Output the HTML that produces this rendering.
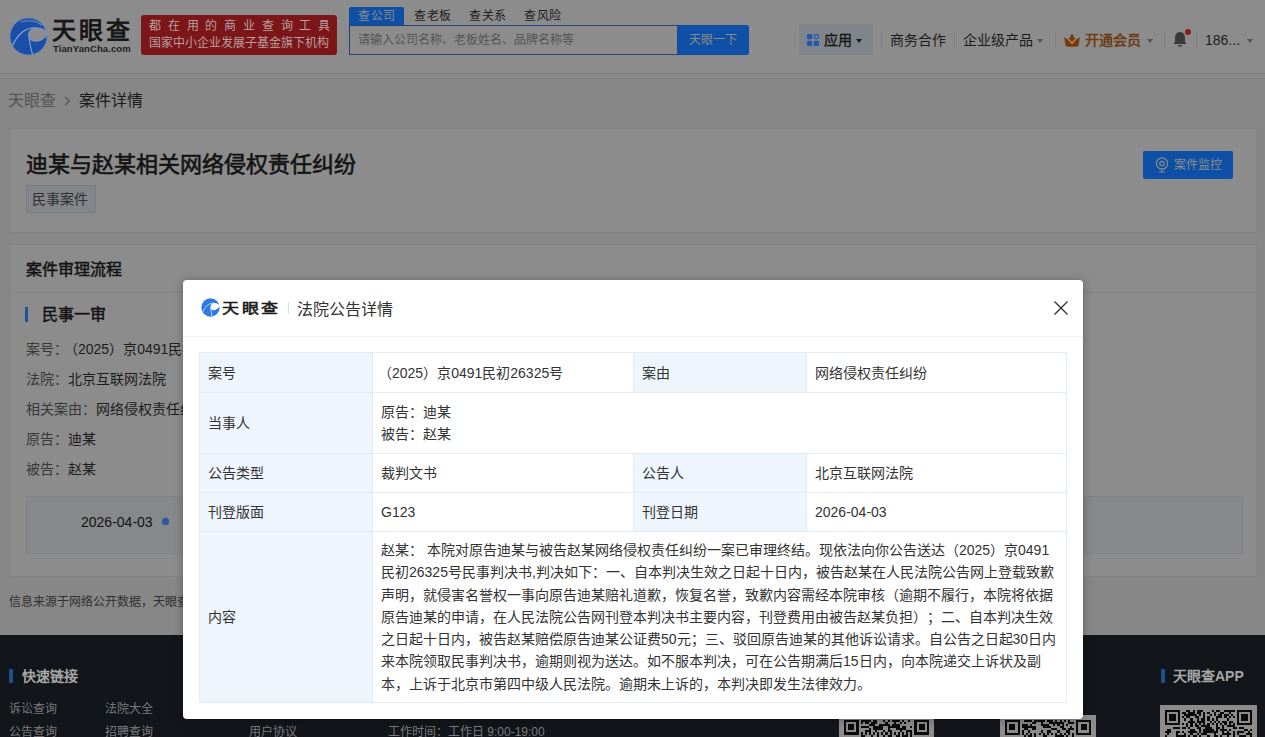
<!DOCTYPE html>
<html lang="zh-CN"><head><meta charset="utf-8">
<style>
*{box-sizing:border-box;margin:0;padding:0}
html,body{width:1265px;height:737px;overflow:hidden}
body{text-spacing-trim:space-all;font-feature-settings:"chws" 0,"halt" 0;font-family:"Liberation Sans",sans-serif;background:#878787;color:#1c1c1c;position:relative;font-size:14px}
.a{position:absolute;white-space:nowrap;line-height:1}
#hdr{position:absolute;left:0;top:0;width:1265px;height:74px;background:#8c8c8c;border-bottom:1px solid #7f7f7f}
.card{position:absolute;background:#8c8c8c;border:1px solid #838383;border-radius:2px}
#foot{position:absolute;left:0;top:635px;width:1265px;height:102px;background:#12151a}
#ov{position:absolute;left:0;top:0;width:1265px;height:737px;background:rgba(0,0,0,.45)}
#modal{position:absolute;left:183px;top:280px;width:900px;height:439px;background:#fff;border-radius:4px;box-shadow:0 1px 10px rgba(0,0,0,.3)}
table.t{position:absolute;left:16px;top:72px;width:868px;border-collapse:collapse;font-size:14px;color:#333;line-height:22px}
table.t td{border:1px solid #e3ebf3;padding:0 8px;vertical-align:middle;white-space:nowrap}
table.t td.l{background:#eef5fd;}
.sep{position:absolute;top:32px;width:1px;height:16px;background:#808080}
.caret{position:absolute;width:0;height:0;border-left:3.5px solid transparent;border-right:3.5px solid transparent;border-top:4px solid #545454}
.qr{position:absolute;background:#8c8c8c;padding:4px}
</style></head><body>
<div id="hdr">
  <!-- logo -->
  <svg class="a" style="left:9px;top:17px" width="39" height="39" viewBox="0 0 39 39">
    <circle cx="19.5" cy="19.5" r="18.5" fill="#1b4ea6" stroke="#5f82bb" stroke-width="0.9"/>
    <path d="M3.5 29 C8 18 16 10.5 27 10.8" stroke="#7f9fd0" stroke-width="1.3" fill="none"/>
    <path d="M12 5 C20 3 28 4 33 8.5" stroke="#5f84c0" stroke-width="1.2" fill="none"/>
    <path d="M27.5 11 C22.5 11 19.5 14 19.5 18 C19.5 22 23 24.5 27.5 24.2 C32 24 35 21.5 37.8 18.5 L37.2 14.5 C35 12 31.5 11 27.5 11 Z" fill="#8c8c8c" stroke="#7f9fd0" stroke-width="0.9"/>
    <path d="M20 21 C21 27 22 32 23.5 37.5" stroke="#7f9fd0" stroke-width="1.2" fill="none"/>
  </svg>
  <div class="a" style="left:52px;top:19px;font-size:24px;color:#161616;letter-spacing:3.2px;-webkit-text-stroke:0.9px #161616">天眼查</div>
  <div class="a" style="left:53px;top:44px;font-size:9.5px;font-weight:bold;color:#1c1c1c;letter-spacing:0.1px">TianYanCha.com</div>
  <div class="a" style="left:141px;top:15px;width:196px;height:40px;background:#7d1619;border-radius:3px"></div>
  <div class="a" style="left:149px;top:20px;font-size:12px;color:#b8a0a0;letter-spacing:6.8px">都在用的商业查询工具</div>
  <div class="a" style="left:149px;top:37px;font-size:12px;color:#b8a0a0">国家中小企业发展子基金旗下机构</div>
  <!-- search -->
  <div class="a" style="left:349px;top:7px;width:55px;height:19px;background:#0d50a5;border-radius:2px 2px 0 0"></div>
  <div class="a" style="left:358px;top:10px;font-size:12px;letter-spacing:0.5px;color:#8c8c8c">查公司</div>
  <div class="a" style="left:414px;top:10px;font-size:12px;letter-spacing:0.5px;color:#1c1c1c">查老板</div>
  <div class="a" style="left:469px;top:10px;font-size:12px;letter-spacing:0.5px;color:#1c1c1c">查关系</div>
  <div class="a" style="left:524px;top:10px;font-size:12px;letter-spacing:0.5px;color:#1c1c1c">查风险</div>
  <div class="a" style="left:349px;top:25px;width:330px;height:30px;border:1px solid #22407a;background:#8c8c8c"></div>
  <div class="a" style="left:358px;top:34px;font-size:12px;color:#545454">请输入公司名称、老板姓名、品牌名称等</div>
  <div class="a" style="left:677px;top:25px;width:72px;height:30px;background:#0d50a5;border-radius:0 2px 2px 0"></div>
  <div class="a" style="left:689px;top:34px;font-size:12px;color:#8c8c8c">天眼一下</div>
  <!-- nav -->
  <div class="sep" style="left:794px"></div>
  <div class="a" style="left:799px;top:24px;width:74px;height:31px;background:#80858c"></div>
  <svg class="a" style="left:807px;top:34px" width="12" height="12" viewBox="0 0 12 12">
    <rect x="0" y="0" width="5.2" height="5.2" rx="1.2" fill="#1f58ad"/>
    <circle cx="9.4" cy="2.6" r="2.1" fill="none" stroke="#1f58ad" stroke-width="1.1"/>
    <rect x="0" y="6.8" width="5.2" height="5.2" rx="1.2" fill="#1f58ad"/>
    <rect x="6.8" y="6.8" width="5.2" height="5.2" rx="1.2" fill="#1f58ad"/>
  </svg>
  <div class="a" style="left:824px;top:33px;font-size:14px;color:#131313;-webkit-text-stroke:0.3px #131313">应用</div>
  <div class="caret" style="left:856px;top:39px;border-top-color:#1c1c1c"></div>
  <div class="sep" style="left:881px"></div>
  <div class="a" style="left:890px;top:33px;font-size:14px;color:#1c1c1c">商务合作</div>
  <div class="sep" style="left:954px"></div>
  <div class="a" style="left:963px;top:33px;font-size:14px;color:#1c1c1c">企业级产品</div>
  <div class="caret" style="left:1037px;top:39px"></div>
  <div class="sep" style="left:1055px"></div>
  <svg class="a" style="left:1064px;top:33px" width="16" height="14" viewBox="0 0 16 14">
    <path d="M0.3 4.2 L4.2 6.8 L8 0.6 L11.8 6.8 L15.7 4.2 L14.8 11 Q14.4 13.8 11.8 13.8 L4.2 13.8 Q1.6 13.8 1.2 11 Z" fill="#723c10"/>
    <path d="M5 7 L8 10.2 L11 7" stroke="#b87a45" stroke-width="1.8" fill="none" stroke-linecap="round"/>
  </svg>
  <div class="a" style="left:1085px;top:33px;font-size:14px;color:#6e3c14;font-weight:bold">开通会员</div>
  <div class="caret" style="left:1147px;top:39px"></div>
  <div class="sep" style="left:1164px"></div>
  <svg class="a" style="left:1173px;top:31px" width="14" height="16" viewBox="0 0 14 16">
    <path d="M7 1 C3.5 1 2 4 2 7 L2 11 L0.5 13 L13.5 13 L12 11 L12 7 C12 4 10.5 1 7 1 Z" fill="#3a3a3a"/>
    <rect x="5" y="14" width="4" height="1.6" rx="0.8" fill="#3a3a3a"/>
  </svg>
  <div class="a" style="left:1185px;top:29px;width:6px;height:6px;border-radius:50%;background:#8a1a1f"></div>
  <div class="sep" style="left:1196px"></div>
  <div class="a" style="left:1205px;top:33px;font-size:14px;color:#1c1c1c">186...</div>
  <div class="caret" style="left:1247px;top:39px"></div>
</div>

<div class="a" style="left:0;top:74px;width:1265px;height:5px;background:#898989;border-bottom:1px solid #838383"></div>
<div class="a" style="left:8px;top:93px;font-size:16px;color:#545454">天眼查</div>
<svg class="a" style="left:64px;top:96px" width="7" height="10" viewBox="0 0 7 10"><path d="M1 1 L5.5 5 L1 9" stroke="#545454" stroke-width="1.2" fill="none"/></svg>
<div class="a" style="left:79px;top:93px;font-size:16px;color:#1c1c1c">案件详情</div>

<div class="card" style="left:9px;top:128px;width:1248px;height:105px">
  <div class="a" style="left:16px;top:25px;font-size:22px;color:#131313;-webkit-text-stroke:0.6px #131313">迪某与赵某相关网络侵权责任纠纷</div>
  <div class="a" style="left:16px;top:56px;width:70px;height:28px;background:#83868a;border:1px solid #787d85;border-radius:2px"></div>
  <div class="a" style="left:22px;top:63px;font-size:14px;color:#2f2f2f">民事案件</div>
  <div class="a" style="left:1133px;top:22px;width:90px;height:28px;background:#0d50a5;border-radius:2px"></div>
  <svg class="a" style="left:1145px;top:28px" width="14" height="16" viewBox="0 0 14 16">
    <circle cx="7" cy="6.5" r="5.6" fill="none" stroke="#8c8c8c" stroke-width="1.2"/>
    <circle cx="7" cy="6.5" r="2.2" fill="none" stroke="#8c8c8c" stroke-width="1.2"/>
    <path d="M4 15 L10 15 M7 12 L7 15" stroke="#8c8c8c" stroke-width="1.2"/>
  </svg>
  <div class="a" style="left:1164px;top:30px;font-size:12px;color:#8c8c8c">案件监控</div>
</div>

<div class="card" style="left:9px;top:244px;width:1248px;height:333px">
  <div class="a" style="left:16px;top:17px;font-size:16px;color:#131313;-webkit-text-stroke:0.5px #131313">案件审理流程</div>
  <div class="a" style="left:0;top:47px;width:1246px;height:1px;background:#838383"></div>
  <div class="a" style="left:15px;top:62px;width:3px;height:15px;background:#1f5299"></div>
  <div class="a" style="left:32px;top:62px;font-size:16px;color:#131313;-webkit-text-stroke:0.5px #131313">民事一审</div>
  <div class="a" style="left:16px;top:97px;font-size:14px;color:#383838">案号：<span style="color:#1c1c1c;margin-left:-4px">（2025）京0491民初26325号</span></div>
  <div class="a" style="left:16px;top:127px;font-size:14px;color:#383838">法院：<span style="color:#1c1c1c">北京互联网法院</span></div>
  <div class="a" style="left:16px;top:157px;font-size:14px;color:#383838">相关案由：<span style="color:#1c1c1c">网络侵权责任纠纷</span></div>
  <div class="a" style="left:16px;top:187px;font-size:14px;color:#383838">原告：<span style="color:#1c1c1c">迪某</span></div>
  <div class="a" style="left:16px;top:217px;font-size:14px;color:#383838">被告：<span style="color:#1c1c1c">赵某</span></div>
  <div class="a" style="left:16px;top:251px;width:1217px;height:58px;background:#87888a;border:1px solid #808285"></div>
  <div class="a" style="left:71px;top:270px;font-size:14px;color:#131313">2026-04-03</div>
  <div class="a" style="left:152px;top:273px;width:7px;height:7px;border-radius:50%;background:#27599c;box-shadow:0 0 0 1.5px #7d8590"></div>
</div>
<div class="a" style="left:9px;top:596px;font-size:12px;color:#303030">信息来源于网络公开数据，天眼查</div>

<div id="foot">
  <div class="a" style="left:9px;top:34px;width:4px;height:14px;background:#1f4e8e"></div>
  <div class="a" style="left:22px;top:34px;font-size:14px;font-weight:bold;color:#a6a6a6">快速链接</div>
  <div class="a" style="left:9px;top:68px;font-size:12px;color:#7a7a7a">诉讼查询</div>
  <div class="a" style="left:105px;top:68px;font-size:12px;color:#7a7a7a">法院大全</div>
  <div class="a" style="left:9px;top:91px;font-size:12px;color:#7a7a7a">公告查询</div>
  <div class="a" style="left:105px;top:91px;font-size:12px;color:#7a7a7a">招聘查询</div>
  <div class="a" style="left:249px;top:91px;font-size:12px;color:#7a7a7a">用户协议</div>
  <div class="a" style="left:388px;top:91px;font-size:12px;color:#7a7a7a">工作时间：工作日 9:00-19:00</div>
  <div class="a" style="left:1161px;top:34px;width:4px;height:14px;background:#1f4e8e"></div>
  <div class="a" style="left:1173px;top:34px;font-size:14px;font-weight:bold;color:#a6a6a6">天眼查APP</div>
  <svg class="a" style="left:839px;top:80px;background:#8c8c8c" width="95" height="95" viewBox="-2.412 -2.412 45.824 45.824" shape-rendering="crispEdges"><path fill="#0a0a0a" d="M0 0h7v1h-7zM8 0h5v1h-5zM14 0h2v1h-2zM19 0h1v1h-1zM21 0h1v1h-1zM23 0h4v1h-4zM28 0h1v1h-1zM31 0h1v1h-1zM34 0h7v1h-7zM0 1h1v1h-1zM6 1h1v1h-1zM8 1h1v1h-1zM10 1h2v1h-2zM13 1h3v1h-3zM20 1h1v1h-1zM24 1h1v1h-1zM27 1h1v1h-1zM29 1h1v1h-1zM34 1h1v1h-1zM40 1h1v1h-1zM0 2h1v1h-1zM2 2h3v1h-3zM6 2h1v1h-1zM12 2h3v1h-3zM17 2h5v1h-5zM23 2h4v1h-4zM34 2h1v1h-1zM36 2h3v1h-3zM40 2h1v1h-1zM0 3h1v1h-1zM2 3h3v1h-3zM6 3h1v1h-1zM8 3h4v1h-4zM14 3h5v1h-5zM21 3h6v1h-6zM28 3h2v1h-2zM32 3h1v1h-1zM34 3h1v1h-1zM36 3h3v1h-3zM40 3h1v1h-1zM0 4h1v1h-1zM2 4h3v1h-3zM6 4h1v1h-1zM12 4h1v1h-1zM14 4h5v1h-5zM21 4h1v1h-1zM25 4h5v1h-5zM34 4h1v1h-1zM36 4h3v1h-3zM40 4h1v1h-1zM0 5h1v1h-1zM6 5h1v1h-1zM10 5h3v1h-3zM15 5h1v1h-1zM19 5h1v1h-1zM21 5h2v1h-2zM27 5h1v1h-1zM30 5h3v1h-3zM34 5h1v1h-1zM40 5h1v1h-1zM0 6h7v1h-7zM8 6h1v1h-1zM10 6h1v1h-1zM12 6h1v1h-1zM14 6h1v1h-1zM16 6h1v1h-1zM18 6h1v1h-1zM20 6h1v1h-1zM22 6h1v1h-1zM24 6h1v1h-1zM26 6h1v1h-1zM28 6h1v1h-1zM30 6h1v1h-1zM32 6h1v1h-1zM34 6h7v1h-7zM8 7h2v1h-2zM13 7h1v1h-1zM16 7h1v1h-1zM19 7h1v1h-1zM21 7h2v1h-2zM25 7h2v1h-2zM28 7h3v1h-3zM32 7h1v1h-1zM2 8h3v1h-3zM6 8h3v1h-3zM11 8h2v1h-2zM16 8h2v1h-2zM19 8h2v1h-2zM24 8h1v1h-1zM26 8h1v1h-1zM28 8h2v1h-2zM32 8h2v1h-2zM35 8h6v1h-6zM0 9h1v1h-1zM2 9h1v1h-1zM4 9h2v1h-2zM7 9h2v1h-2zM11 9h2v1h-2zM14 9h1v1h-1zM16 9h2v1h-2zM19 9h1v1h-1zM23 9h1v1h-1zM27 9h5v1h-5zM33 9h3v1h-3zM39 9h2v1h-2zM0 10h5v1h-5zM6 10h1v1h-1zM8 10h1v1h-1zM10 10h5v1h-5zM16 10h1v1h-1zM18 10h8v1h-8zM32 10h2v1h-2zM35 10h1v1h-1zM38 10h1v1h-1zM3 11h1v1h-1zM13 11h5v1h-5zM23 11h2v1h-2zM30 11h1v1h-1zM32 11h3v1h-3zM36 11h1v1h-1zM39 11h2v1h-2zM0 12h1v1h-1zM5 12h3v1h-3zM9 12h1v1h-1zM11 12h3v1h-3zM17 12h1v1h-1zM19 12h3v1h-3zM23 12h1v1h-1zM26 12h2v1h-2zM30 12h3v1h-3zM34 12h1v1h-1zM36 12h1v1h-1zM39 12h1v1h-1zM3 13h1v1h-1zM5 13h1v1h-1zM7 13h7v1h-7zM15 13h1v1h-1zM18 13h1v1h-1zM22 13h3v1h-3zM27 13h5v1h-5zM33 13h1v1h-1zM35 13h2v1h-2zM38 13h2v1h-2zM6 14h2v1h-2zM9 14h1v1h-1zM12 14h2v1h-2zM15 14h4v1h-4zM21 14h1v1h-1zM23 14h1v1h-1zM25 14h4v1h-4zM30 14h2v1h-2zM34 14h7v1h-7zM0 15h1v1h-1zM4 15h2v1h-2zM7 15h4v1h-4zM12 15h1v1h-1zM16 15h5v1h-5zM24 15h2v1h-2zM28 15h1v1h-1zM30 15h2v1h-2zM36 15h3v1h-3zM4 16h1v1h-1zM6 16h1v1h-1zM8 16h1v1h-1zM11 16h3v1h-3zM16 16h2v1h-2zM20 16h2v1h-2zM23 16h3v1h-3zM29 16h3v1h-3zM34 16h3v1h-3zM38 16h2v1h-2zM1 17h4v1h-4zM10 17h1v1h-1zM12 17h1v1h-1zM14 17h2v1h-2zM17 17h1v1h-1zM19 17h4v1h-4zM25 17h3v1h-3zM29 17h4v1h-4zM38 17h2v1h-2zM1 18h1v1h-1zM3 18h7v1h-7zM11 18h1v1h-1zM13 18h2v1h-2zM17 18h4v1h-4zM22 18h2v1h-2zM25 18h2v1h-2zM29 18h3v1h-3zM33 18h1v1h-1zM36 18h2v1h-2zM40 18h1v1h-1zM1 19h3v1h-3zM8 19h3v1h-3zM13 19h4v1h-4zM18 19h1v1h-1zM24 19h3v1h-3zM28 19h2v1h-2zM31 19h3v1h-3zM35 19h1v1h-1zM39 19h2v1h-2zM0 20h2v1h-2zM3 20h4v1h-4zM11 20h1v1h-1zM13 20h1v1h-1zM15 20h1v1h-1zM17 20h4v1h-4zM23 20h2v1h-2zM27 20h1v1h-1zM31 20h2v1h-2zM36 20h4v1h-4zM2 21h1v1h-1zM4 21h2v1h-2zM8 21h1v1h-1zM11 21h5v1h-5zM18 21h3v1h-3zM22 21h3v1h-3zM27 21h3v1h-3zM32 21h2v1h-2zM35 21h3v1h-3zM39 21h1v1h-1zM0 22h2v1h-2zM4 22h5v1h-5zM10 22h1v1h-1zM12 22h1v1h-1zM14 22h3v1h-3zM20 22h1v1h-1zM22 22h1v1h-1zM24 22h2v1h-2zM28 22h2v1h-2zM32 22h2v1h-2zM36 22h2v1h-2zM39 22h1v1h-1zM2 23h1v1h-1zM4 23h2v1h-2zM8 23h3v1h-3zM12 23h3v1h-3zM17 23h1v1h-1zM20 23h1v1h-1zM22 23h1v1h-1zM26 23h2v1h-2zM29 23h1v1h-1zM31 23h3v1h-3zM35 23h2v1h-2zM39 23h2v1h-2zM0 24h8v1h-8zM9 24h1v1h-1zM13 24h1v1h-1zM15 24h1v1h-1zM17 24h1v1h-1zM22 24h1v1h-1zM24 24h1v1h-1zM27 24h1v1h-1zM30 24h2v1h-2zM33 24h1v1h-1zM35 24h1v1h-1zM37 24h1v1h-1zM40 24h1v1h-1zM0 25h1v1h-1zM2 25h4v1h-4zM9 25h1v1h-1zM11 25h1v1h-1zM14 25h1v1h-1zM19 25h1v1h-1zM22 25h1v1h-1zM24 25h1v1h-1zM27 25h1v1h-1zM29 25h2v1h-2zM32 25h1v1h-1zM34 25h1v1h-1zM39 25h2v1h-2zM0 26h2v1h-2zM3 26h1v1h-1zM6 26h2v1h-2zM9 26h6v1h-6zM17 26h1v1h-1zM19 26h2v1h-2zM22 26h3v1h-3zM28 26h3v1h-3zM33 26h1v1h-1zM35 26h1v1h-1zM38 26h1v1h-1zM40 26h1v1h-1zM1 27h3v1h-3zM5 27h1v1h-1zM8 27h2v1h-2zM14 27h4v1h-4zM21 27h1v1h-1zM24 27h1v1h-1zM26 27h6v1h-6zM36 27h1v1h-1zM38 27h1v1h-1zM0 28h1v1h-1zM3 28h1v1h-1zM5 28h3v1h-3zM11 28h1v1h-1zM13 28h2v1h-2zM20 28h1v1h-1zM24 28h1v1h-1zM27 28h2v1h-2zM30 28h1v1h-1zM32 28h3v1h-3zM36 28h4v1h-4zM3 29h1v1h-1zM5 29h1v1h-1zM9 29h1v1h-1zM13 29h4v1h-4zM22 29h3v1h-3zM26 29h6v1h-6zM33 29h2v1h-2zM39 29h2v1h-2zM0 30h1v1h-1zM2 30h1v1h-1zM5 30h3v1h-3zM9 30h3v1h-3zM14 30h3v1h-3zM18 30h3v1h-3zM22 30h1v1h-1zM24 30h2v1h-2zM27 30h2v1h-2zM30 30h1v1h-1zM35 30h3v1h-3zM39 30h1v1h-1zM0 31h3v1h-3zM5 31h1v1h-1zM7 31h2v1h-2zM13 31h3v1h-3zM19 31h2v1h-2zM23 31h2v1h-2zM26 31h3v1h-3zM31 31h4v1h-4zM36 31h3v1h-3zM0 32h1v1h-1zM2 32h2v1h-2zM6 32h3v1h-3zM10 32h5v1h-5zM19 32h2v1h-2zM22 32h1v1h-1zM25 32h1v1h-1zM28 32h2v1h-2zM37 32h2v1h-2zM40 32h1v1h-1zM8 33h1v1h-1zM11 33h1v1h-1zM14 33h2v1h-2zM17 33h1v1h-1zM19 33h1v1h-1zM23 33h1v1h-1zM31 33h1v1h-1zM33 33h1v1h-1zM35 33h1v1h-1zM37 33h1v1h-1zM39 33h2v1h-2zM0 34h7v1h-7zM8 34h1v1h-1zM12 34h1v1h-1zM14 34h3v1h-3zM20 34h1v1h-1zM22 34h1v1h-1zM24 34h1v1h-1zM28 34h2v1h-2zM31 34h1v1h-1zM33 34h1v1h-1zM35 34h6v1h-6zM0 35h1v1h-1zM6 35h1v1h-1zM8 35h1v1h-1zM11 35h1v1h-1zM15 35h1v1h-1zM18 35h2v1h-2zM22 35h4v1h-4zM27 35h2v1h-2zM31 35h1v1h-1zM39 35h1v1h-1zM0 36h1v1h-1zM2 36h3v1h-3zM6 36h1v1h-1zM8 36h6v1h-6zM16 36h1v1h-1zM18 36h1v1h-1zM22 36h2v1h-2zM25 36h1v1h-1zM28 36h1v1h-1zM32 36h1v1h-1zM35 36h1v1h-1zM37 36h1v1h-1zM40 36h1v1h-1zM0 37h1v1h-1zM2 37h3v1h-3zM6 37h1v1h-1zM10 37h1v1h-1zM12 37h1v1h-1zM14 37h1v1h-1zM19 37h3v1h-3zM25 37h1v1h-1zM29 37h4v1h-4zM0 38h1v1h-1zM2 38h3v1h-3zM6 38h1v1h-1zM8 38h2v1h-2zM13 38h1v1h-1zM17 38h5v1h-5zM24 38h1v1h-1zM26 38h2v1h-2zM31 38h3v1h-3zM37 38h3v1h-3zM0 39h1v1h-1zM6 39h1v1h-1zM9 39h2v1h-2zM12 39h1v1h-1zM14 39h2v1h-2zM20 39h1v1h-1zM23 39h1v1h-1zM25 39h1v1h-1zM28 39h2v1h-2zM32 39h2v1h-2zM35 39h1v1h-1zM37 39h3v1h-3zM0 40h7v1h-7zM8 40h1v1h-1zM13 40h2v1h-2zM18 40h1v1h-1zM23 40h2v1h-2zM26 40h1v1h-1zM31 40h4v1h-4zM38 40h1v1h-1z"/></svg>
  <svg class="a" style="left:1000px;top:80px;background:#8c8c8c" width="96" height="96" viewBox="-2.384 -2.384 45.767 45.767" shape-rendering="crispEdges"><path fill="#0a0a0a" d="M0 0h7v1h-7zM9 0h4v1h-4zM14 0h5v1h-5zM20 0h3v1h-3zM24 0h1v1h-1zM26 0h1v1h-1zM28 0h1v1h-1zM30 0h1v1h-1zM34 0h7v1h-7zM0 1h1v1h-1zM6 1h1v1h-1zM13 1h2v1h-2zM17 1h1v1h-1zM21 1h7v1h-7zM30 1h3v1h-3zM34 1h1v1h-1zM40 1h1v1h-1zM0 2h1v1h-1zM2 2h3v1h-3zM6 2h1v1h-1zM8 2h3v1h-3zM12 2h1v1h-1zM17 2h4v1h-4zM23 2h1v1h-1zM25 2h1v1h-1zM27 2h1v1h-1zM29 2h1v1h-1zM34 2h1v1h-1zM36 2h3v1h-3zM40 2h1v1h-1zM0 3h1v1h-1zM2 3h3v1h-3zM6 3h1v1h-1zM8 3h7v1h-7zM18 3h4v1h-4zM26 3h2v1h-2zM31 3h1v1h-1zM34 3h1v1h-1zM36 3h3v1h-3zM40 3h1v1h-1zM0 4h1v1h-1zM2 4h3v1h-3zM6 4h1v1h-1zM9 4h2v1h-2zM13 4h2v1h-2zM22 4h3v1h-3zM27 4h2v1h-2zM30 4h3v1h-3zM34 4h1v1h-1zM36 4h3v1h-3zM40 4h1v1h-1zM0 5h1v1h-1zM6 5h1v1h-1zM8 5h1v1h-1zM11 5h1v1h-1zM17 5h1v1h-1zM20 5h2v1h-2zM25 5h1v1h-1zM29 5h2v1h-2zM34 5h1v1h-1zM40 5h1v1h-1zM0 6h7v1h-7zM8 6h1v1h-1zM10 6h1v1h-1zM12 6h1v1h-1zM14 6h1v1h-1zM16 6h1v1h-1zM18 6h1v1h-1zM20 6h1v1h-1zM22 6h1v1h-1zM24 6h1v1h-1zM26 6h1v1h-1zM28 6h1v1h-1zM30 6h1v1h-1zM32 6h1v1h-1zM34 6h7v1h-7zM9 7h1v1h-1zM11 7h2v1h-2zM14 7h1v1h-1zM18 7h2v1h-2zM24 7h4v1h-4zM29 7h1v1h-1zM32 7h1v1h-1zM1 8h1v1h-1zM3 8h1v1h-1zM6 8h2v1h-2zM10 8h6v1h-6zM17 8h1v1h-1zM19 8h2v1h-2zM23 8h5v1h-5zM29 8h1v1h-1zM35 8h1v1h-1zM37 8h1v1h-1zM39 8h1v1h-1zM0 9h1v1h-1zM2 9h1v1h-1zM5 9h1v1h-1zM7 9h3v1h-3zM12 9h2v1h-2zM15 9h1v1h-1zM18 9h1v1h-1zM20 9h1v1h-1zM22 9h3v1h-3zM26 9h2v1h-2zM33 9h1v1h-1zM35 9h1v1h-1zM37 9h1v1h-1zM39 9h1v1h-1zM0 10h1v1h-1zM2 10h1v1h-1zM6 10h4v1h-4zM13 10h1v1h-1zM16 10h1v1h-1zM18 10h4v1h-4zM23 10h2v1h-2zM26 10h1v1h-1zM29 10h2v1h-2zM33 10h1v1h-1zM38 10h1v1h-1zM40 10h1v1h-1zM1 11h2v1h-2zM11 11h2v1h-2zM15 11h3v1h-3zM20 11h1v1h-1zM23 11h2v1h-2zM26 11h2v1h-2zM31 11h1v1h-1zM33 11h2v1h-2zM37 11h1v1h-1zM39 11h1v1h-1zM2 12h1v1h-1zM6 12h3v1h-3zM11 12h1v1h-1zM13 12h1v1h-1zM15 12h1v1h-1zM17 12h7v1h-7zM28 12h2v1h-2zM37 12h3v1h-3zM0 13h2v1h-2zM10 13h3v1h-3zM15 13h1v1h-1zM19 13h1v1h-1zM24 13h1v1h-1zM26 13h1v1h-1zM30 13h6v1h-6zM38 13h1v1h-1zM40 13h1v1h-1zM0 14h2v1h-2zM5 14h6v1h-6zM12 14h1v1h-1zM14 14h4v1h-4zM22 14h1v1h-1zM24 14h6v1h-6zM33 14h1v1h-1zM35 14h1v1h-1zM38 14h1v1h-1zM3 15h2v1h-2zM8 15h1v1h-1zM10 15h3v1h-3zM14 15h7v1h-7zM22 15h1v1h-1zM26 15h1v1h-1zM30 15h1v1h-1zM34 15h1v1h-1zM39 15h2v1h-2zM1 16h2v1h-2zM4 16h1v1h-1zM6 16h1v1h-1zM8 16h2v1h-2zM14 16h1v1h-1zM16 16h6v1h-6zM27 16h1v1h-1zM33 16h3v1h-3zM40 16h1v1h-1zM0 17h1v1h-1zM3 17h1v1h-1zM7 17h2v1h-2zM11 17h1v1h-1zM13 17h1v1h-1zM15 17h2v1h-2zM27 17h2v1h-2zM30 17h2v1h-2zM0 18h1v1h-1zM2 18h3v1h-3zM6 18h2v1h-2zM9 18h3v1h-3zM16 18h1v1h-1zM18 18h3v1h-3zM22 18h2v1h-2zM31 18h4v1h-4zM37 18h4v1h-4zM0 19h1v1h-1zM4 19h2v1h-2zM8 19h2v1h-2zM11 19h1v1h-1zM15 19h3v1h-3zM19 19h1v1h-1zM23 19h1v1h-1zM25 19h1v1h-1zM29 19h3v1h-3zM33 19h1v1h-1zM39 19h2v1h-2zM0 20h2v1h-2zM3 20h1v1h-1zM5 20h3v1h-3zM9 20h5v1h-5zM15 20h3v1h-3zM20 20h3v1h-3zM25 20h2v1h-2zM28 20h1v1h-1zM31 20h2v1h-2zM35 20h4v1h-4zM40 20h1v1h-1zM0 21h1v1h-1zM2 21h4v1h-4zM8 21h1v1h-1zM10 21h2v1h-2zM13 21h1v1h-1zM15 21h2v1h-2zM18 21h10v1h-10zM29 21h2v1h-2zM34 21h2v1h-2zM37 21h4v1h-4zM1 22h2v1h-2zM4 22h1v1h-1zM6 22h4v1h-4zM11 22h1v1h-1zM13 22h5v1h-5zM19 22h1v1h-1zM21 22h1v1h-1zM23 22h1v1h-1zM26 22h1v1h-1zM29 22h2v1h-2zM33 22h1v1h-1zM35 22h5v1h-5zM1 23h1v1h-1zM3 23h3v1h-3zM10 23h1v1h-1zM12 23h2v1h-2zM15 23h5v1h-5zM21 23h5v1h-5zM28 23h1v1h-1zM30 23h2v1h-2zM33 23h2v1h-2zM39 23h1v1h-1zM1 24h2v1h-2zM5 24h3v1h-3zM9 24h4v1h-4zM17 24h3v1h-3zM21 24h2v1h-2zM24 24h3v1h-3zM28 24h2v1h-2zM32 24h2v1h-2zM35 24h1v1h-1zM39 24h2v1h-2zM0 25h2v1h-2zM4 25h1v1h-1zM7 25h4v1h-4zM12 25h3v1h-3zM17 25h1v1h-1zM19 25h1v1h-1zM22 25h1v1h-1zM26 25h2v1h-2zM32 25h1v1h-1zM34 25h1v1h-1zM39 25h1v1h-1zM0 26h1v1h-1zM2 26h5v1h-5zM10 26h3v1h-3zM14 26h1v1h-1zM16 26h6v1h-6zM23 26h2v1h-2zM26 26h2v1h-2zM30 26h2v1h-2zM35 26h2v1h-2zM40 26h1v1h-1zM2 27h1v1h-1zM4 27h1v1h-1zM7 27h2v1h-2zM11 27h1v1h-1zM16 27h1v1h-1zM18 27h2v1h-2zM22 27h5v1h-5zM31 27h1v1h-1zM33 27h3v1h-3zM38 27h1v1h-1zM40 27h1v1h-1zM4 28h1v1h-1zM6 28h5v1h-5zM12 28h2v1h-2zM15 28h3v1h-3zM21 28h4v1h-4zM29 28h2v1h-2zM33 28h3v1h-3zM37 28h2v1h-2zM3 29h1v1h-1zM9 29h2v1h-2zM12 29h1v1h-1zM14 29h2v1h-2zM18 29h2v1h-2zM22 29h2v1h-2zM25 29h1v1h-1zM27 29h4v1h-4zM32 29h3v1h-3zM36 29h1v1h-1zM38 29h1v1h-1zM0 30h3v1h-3zM4 30h3v1h-3zM9 30h1v1h-1zM11 30h1v1h-1zM18 30h1v1h-1zM20 30h1v1h-1zM22 30h3v1h-3zM26 30h3v1h-3zM31 30h1v1h-1zM36 30h1v1h-1zM39 30h2v1h-2zM0 31h1v1h-1zM2 31h1v1h-1zM5 31h1v1h-1zM8 31h1v1h-1zM10 31h4v1h-4zM16 31h1v1h-1zM18 31h1v1h-1zM20 31h1v1h-1zM24 31h1v1h-1zM27 31h1v1h-1zM29 31h3v1h-3zM34 31h4v1h-4zM0 32h1v1h-1zM2 32h1v1h-1zM4 32h1v1h-1zM6 32h1v1h-1zM9 32h2v1h-2zM15 32h6v1h-6zM22 32h1v1h-1zM24 32h1v1h-1zM27 32h1v1h-1zM29 32h3v1h-3zM34 32h1v1h-1zM9 33h1v1h-1zM11 33h1v1h-1zM14 33h6v1h-6zM21 33h1v1h-1zM23 33h2v1h-2zM26 33h1v1h-1zM28 33h1v1h-1zM32 33h3v1h-3zM36 33h2v1h-2zM40 33h1v1h-1zM0 34h7v1h-7zM9 34h1v1h-1zM16 34h4v1h-4zM22 34h3v1h-3zM27 34h1v1h-1zM30 34h2v1h-2zM34 34h1v1h-1zM36 34h1v1h-1zM39 34h2v1h-2zM0 35h1v1h-1zM6 35h1v1h-1zM12 35h1v1h-1zM14 35h1v1h-1zM17 35h3v1h-3zM22 35h1v1h-1zM24 35h3v1h-3zM34 35h1v1h-1zM36 35h1v1h-1zM38 35h3v1h-3zM0 36h1v1h-1zM2 36h3v1h-3zM6 36h1v1h-1zM8 36h1v1h-1zM10 36h1v1h-1zM13 36h1v1h-1zM15 36h2v1h-2zM18 36h1v1h-1zM20 36h2v1h-2zM26 36h1v1h-1zM30 36h1v1h-1zM35 36h3v1h-3zM39 36h2v1h-2zM0 37h1v1h-1zM2 37h3v1h-3zM6 37h1v1h-1zM12 37h1v1h-1zM14 37h1v1h-1zM16 37h3v1h-3zM21 37h1v1h-1zM24 37h1v1h-1zM26 37h3v1h-3zM30 37h3v1h-3zM35 37h1v1h-1zM37 37h1v1h-1zM0 38h1v1h-1zM2 38h3v1h-3zM6 38h1v1h-1zM8 38h1v1h-1zM10 38h2v1h-2zM17 38h1v1h-1zM23 38h2v1h-2zM26 38h1v1h-1zM31 38h2v1h-2zM34 38h1v1h-1zM37 38h1v1h-1zM39 38h2v1h-2zM0 39h1v1h-1zM6 39h1v1h-1zM8 39h4v1h-4zM14 39h2v1h-2zM17 39h1v1h-1zM19 39h3v1h-3zM26 39h1v1h-1zM28 39h2v1h-2zM31 39h1v1h-1zM33 39h5v1h-5zM39 39h2v1h-2zM0 40h7v1h-7zM8 40h4v1h-4zM15 40h1v1h-1zM17 40h1v1h-1zM21 40h2v1h-2zM24 40h1v1h-1zM29 40h1v1h-1zM31 40h1v1h-1zM33 40h3v1h-3zM38 40h1v1h-1z"/></svg>
  <svg class="a" style="left:1160px;top:70px;background:#8c8c8c" width="97" height="97" viewBox="-2.356 -2.356 45.713 45.713" shape-rendering="crispEdges"><path fill="#0a0a0a" d="M0 0h7v1h-7zM10 0h2v1h-2zM13 0h1v1h-1zM15 0h3v1h-3zM22 0h1v1h-1zM24 0h2v1h-2zM28 0h5v1h-5zM34 0h7v1h-7zM0 1h1v1h-1zM6 1h1v1h-1zM8 1h2v1h-2zM11 1h3v1h-3zM15 1h2v1h-2zM18 1h1v1h-1zM20 1h1v1h-1zM23 1h1v1h-1zM26 1h2v1h-2zM30 1h1v1h-1zM34 1h1v1h-1zM40 1h1v1h-1zM0 2h1v1h-1zM2 2h3v1h-3zM6 2h1v1h-1zM9 2h6v1h-6zM16 2h1v1h-1zM18 2h1v1h-1zM21 2h1v1h-1zM23 2h1v1h-1zM25 2h2v1h-2zM28 2h2v1h-2zM31 2h1v1h-1zM34 2h1v1h-1zM36 2h3v1h-3zM40 2h1v1h-1zM0 3h1v1h-1zM2 3h3v1h-3zM6 3h1v1h-1zM8 3h1v1h-1zM10 3h2v1h-2zM14 3h2v1h-2zM18 3h1v1h-1zM20 3h1v1h-1zM24 3h3v1h-3zM28 3h1v1h-1zM30 3h1v1h-1zM32 3h1v1h-1zM34 3h1v1h-1zM36 3h3v1h-3zM40 3h1v1h-1zM0 4h1v1h-1zM2 4h3v1h-3zM6 4h1v1h-1zM9 4h1v1h-1zM12 4h1v1h-1zM15 4h1v1h-1zM17 4h2v1h-2zM20 4h1v1h-1zM22 4h1v1h-1zM24 4h1v1h-1zM29 4h1v1h-1zM34 4h1v1h-1zM36 4h3v1h-3zM40 4h1v1h-1zM0 5h1v1h-1zM6 5h1v1h-1zM11 5h3v1h-3zM15 5h4v1h-4zM21 5h1v1h-1zM23 5h1v1h-1zM25 5h1v1h-1zM27 5h2v1h-2zM30 5h2v1h-2zM34 5h1v1h-1zM40 5h1v1h-1zM0 6h7v1h-7zM8 6h1v1h-1zM10 6h1v1h-1zM12 6h1v1h-1zM14 6h1v1h-1zM16 6h1v1h-1zM18 6h1v1h-1zM20 6h1v1h-1zM22 6h1v1h-1zM24 6h1v1h-1zM26 6h1v1h-1zM28 6h1v1h-1zM30 6h1v1h-1zM32 6h1v1h-1zM34 6h7v1h-7zM10 7h1v1h-1zM12 7h1v1h-1zM14 7h2v1h-2zM17 7h4v1h-4zM24 7h1v1h-1zM27 7h1v1h-1zM29 7h4v1h-4zM4 8h3v1h-3zM8 8h2v1h-2zM11 8h1v1h-1zM15 8h2v1h-2zM19 8h3v1h-3zM24 8h2v1h-2zM27 8h1v1h-1zM32 8h2v1h-2zM35 8h2v1h-2zM1 9h2v1h-2zM12 9h2v1h-2zM16 9h1v1h-1zM18 9h5v1h-5zM24 9h1v1h-1zM26 9h3v1h-3zM30 9h1v1h-1zM37 9h2v1h-2zM40 9h1v1h-1zM0 10h3v1h-3zM5 10h2v1h-2zM8 10h1v1h-1zM11 10h4v1h-4zM16 10h1v1h-1zM18 10h7v1h-7zM27 10h1v1h-1zM29 10h1v1h-1zM32 10h1v1h-1zM34 10h3v1h-3zM39 10h1v1h-1zM1 11h1v1h-1zM5 11h1v1h-1zM9 11h1v1h-1zM12 11h1v1h-1zM15 11h1v1h-1zM17 11h3v1h-3zM23 11h1v1h-1zM27 11h4v1h-4zM32 11h1v1h-1zM34 11h1v1h-1zM38 11h3v1h-3zM0 12h1v1h-1zM5 12h5v1h-5zM11 12h1v1h-1zM13 12h2v1h-2zM16 12h1v1h-1zM20 12h1v1h-1zM23 12h2v1h-2zM26 12h1v1h-1zM29 12h1v1h-1zM32 12h1v1h-1zM35 12h3v1h-3zM40 12h1v1h-1zM0 13h1v1h-1zM3 13h1v1h-1zM9 13h2v1h-2zM12 13h1v1h-1zM16 13h2v1h-2zM20 13h1v1h-1zM23 13h1v1h-1zM25 13h1v1h-1zM28 13h2v1h-2zM31 13h1v1h-1zM35 13h1v1h-1zM39 13h2v1h-2zM0 14h1v1h-1zM2 14h3v1h-3zM6 14h1v1h-1zM8 14h1v1h-1zM11 14h4v1h-4zM16 14h2v1h-2zM19 14h1v1h-1zM22 14h3v1h-3zM28 14h1v1h-1zM30 14h1v1h-1zM32 14h2v1h-2zM35 14h1v1h-1zM38 14h2v1h-2zM0 15h2v1h-2zM4 15h1v1h-1zM7 15h2v1h-2zM10 15h1v1h-1zM12 15h7v1h-7zM22 15h1v1h-1zM24 15h2v1h-2zM27 15h2v1h-2zM30 15h3v1h-3zM35 15h2v1h-2zM38 15h1v1h-1zM1 16h3v1h-3zM5 16h4v1h-4zM13 16h1v1h-1zM20 16h10v1h-10zM32 16h1v1h-1zM34 16h1v1h-1zM38 16h1v1h-1zM40 16h1v1h-1zM1 17h4v1h-4zM8 17h2v1h-2zM12 17h1v1h-1zM14 17h2v1h-2zM23 17h1v1h-1zM25 17h1v1h-1zM27 17h4v1h-4zM34 17h1v1h-1zM36 17h3v1h-3zM40 17h1v1h-1zM0 18h5v1h-5zM6 18h1v1h-1zM9 18h1v1h-1zM11 18h2v1h-2zM14 18h3v1h-3zM19 18h1v1h-1zM23 18h5v1h-5zM30 18h1v1h-1zM33 18h2v1h-2zM38 18h1v1h-1zM40 18h1v1h-1zM0 19h5v1h-5zM7 19h6v1h-6zM14 19h5v1h-5zM20 19h2v1h-2zM27 19h1v1h-1zM29 19h6v1h-6zM36 19h2v1h-2zM0 20h2v1h-2zM5 20h5v1h-5zM11 20h1v1h-1zM13 20h1v1h-1zM16 20h2v1h-2zM20 20h3v1h-3zM31 20h4v1h-4zM0 21h1v1h-1zM2 21h3v1h-3zM9 21h3v1h-3zM13 21h2v1h-2zM17 21h4v1h-4zM22 21h1v1h-1zM24 21h1v1h-1zM26 21h1v1h-1zM28 21h1v1h-1zM30 21h1v1h-1zM36 21h1v1h-1zM40 21h1v1h-1zM1 22h3v1h-3zM5 22h3v1h-3zM9 22h1v1h-1zM15 22h4v1h-4zM20 22h2v1h-2zM23 22h5v1h-5zM29 22h1v1h-1zM31 22h1v1h-1zM34 22h1v1h-1zM38 22h1v1h-1zM0 23h1v1h-1zM3 23h1v1h-1zM7 23h1v1h-1zM9 23h1v1h-1zM12 23h2v1h-2zM17 23h1v1h-1zM19 23h3v1h-3zM24 23h2v1h-2zM28 23h1v1h-1zM30 23h2v1h-2zM33 23h1v1h-1zM36 23h1v1h-1zM38 23h2v1h-2zM2 24h2v1h-2zM6 24h1v1h-1zM8 24h1v1h-1zM11 24h1v1h-1zM14 24h1v1h-1zM18 24h1v1h-1zM25 24h3v1h-3zM30 24h2v1h-2zM35 24h1v1h-1zM39 24h2v1h-2zM1 25h1v1h-1zM3 25h2v1h-2zM9 25h2v1h-2zM14 25h4v1h-4zM23 25h1v1h-1zM26 25h2v1h-2zM29 25h1v1h-1zM31 25h3v1h-3zM36 25h1v1h-1zM38 25h1v1h-1zM2 26h1v1h-1zM6 26h1v1h-1zM9 26h1v1h-1zM11 26h1v1h-1zM16 26h2v1h-2zM20 26h5v1h-5zM26 26h1v1h-1zM28 26h1v1h-1zM32 26h2v1h-2zM40 26h1v1h-1zM2 27h1v1h-1zM11 27h1v1h-1zM14 27h1v1h-1zM17 27h5v1h-5zM28 27h3v1h-3zM32 27h1v1h-1zM34 27h3v1h-3zM38 27h1v1h-1zM0 28h1v1h-1zM5 28h3v1h-3zM9 28h6v1h-6zM26 28h1v1h-1zM28 28h2v1h-2zM31 28h3v1h-3zM36 28h1v1h-1zM38 28h3v1h-3zM4 29h1v1h-1zM10 29h1v1h-1zM12 29h1v1h-1zM15 29h1v1h-1zM17 29h6v1h-6zM24 29h1v1h-1zM26 29h4v1h-4zM31 29h1v1h-1zM33 29h3v1h-3zM38 29h3v1h-3zM0 30h1v1h-1zM6 30h1v1h-1zM8 30h1v1h-1zM13 30h2v1h-2zM17 30h2v1h-2zM20 30h1v1h-1zM24 30h1v1h-1zM26 30h1v1h-1zM28 30h4v1h-4zM33 30h4v1h-4zM39 30h1v1h-1zM0 31h2v1h-2zM5 31h1v1h-1zM7 31h1v1h-1zM9 31h3v1h-3zM14 31h2v1h-2zM17 31h5v1h-5zM26 31h4v1h-4zM32 31h2v1h-2zM40 31h1v1h-1zM1 32h1v1h-1zM3 32h1v1h-1zM6 32h4v1h-4zM12 32h6v1h-6zM20 32h3v1h-3zM26 32h1v1h-1zM28 32h1v1h-1zM30 32h2v1h-2zM34 32h1v1h-1zM36 32h5v1h-5zM11 33h2v1h-2zM16 33h2v1h-2zM20 33h3v1h-3zM30 33h1v1h-1zM32 33h1v1h-1zM36 33h1v1h-1zM38 33h1v1h-1zM0 34h7v1h-7zM8 34h1v1h-1zM11 34h2v1h-2zM14 34h4v1h-4zM20 34h3v1h-3zM28 34h3v1h-3zM33 34h1v1h-1zM36 34h1v1h-1zM40 34h1v1h-1zM0 35h1v1h-1zM6 35h1v1h-1zM9 35h2v1h-2zM12 35h4v1h-4zM17 35h2v1h-2zM22 35h1v1h-1zM24 35h1v1h-1zM30 35h1v1h-1zM32 35h1v1h-1zM36 35h1v1h-1zM39 35h1v1h-1zM0 36h1v1h-1zM2 36h3v1h-3zM6 36h1v1h-1zM8 36h2v1h-2zM11 36h1v1h-1zM15 36h1v1h-1zM17 36h4v1h-4zM22 36h1v1h-1zM28 36h3v1h-3zM33 36h1v1h-1zM35 36h1v1h-1zM39 36h1v1h-1zM0 37h1v1h-1zM2 37h3v1h-3zM6 37h1v1h-1zM10 37h5v1h-5zM16 37h1v1h-1zM18 37h1v1h-1zM22 37h3v1h-3zM27 37h1v1h-1zM30 37h3v1h-3zM34 37h1v1h-1zM36 37h3v1h-3zM0 38h1v1h-1zM2 38h3v1h-3zM6 38h1v1h-1zM8 38h4v1h-4zM14 38h1v1h-1zM18 38h2v1h-2zM23 38h1v1h-1zM27 38h2v1h-2zM31 38h7v1h-7zM0 39h1v1h-1zM6 39h1v1h-1zM8 39h4v1h-4zM13 39h3v1h-3zM18 39h1v1h-1zM20 39h2v1h-2zM24 39h2v1h-2zM27 39h1v1h-1zM32 39h4v1h-4zM38 39h1v1h-1zM0 40h7v1h-7zM9 40h3v1h-3zM16 40h1v1h-1zM22 40h1v1h-1zM25 40h5v1h-5zM31 40h1v1h-1zM33 40h3v1h-3zM38 40h1v1h-1z"/></svg>
</div>


<div id="modal">
  <svg class="a" style="left:18px;top:18px" width="19" height="19" viewBox="0 0 39 39">
    <circle cx="19.5" cy="19.5" r="18.8" fill="#2d7ae3"/>
    <path d="M3.5 29 C8 18 16 10 27 10.5" stroke="#bcd6f7" stroke-width="2" fill="none"/>
    <path d="M27 10.5 C22 11 19 15 19.5 19.5 C20 24 23.5 25.5 27 25 C31 24.5 34.5 22 38.5 18 L38.5 15 C36 13 33 11 27 10.5 Z" fill="#fff"/>
    <path d="M19.5 19.5 C20 26 22 31 23 38" stroke="#bcd6f7" stroke-width="2" fill="none"/>
  </svg>
  <div class="a" style="left:222px;top:299px;font-size:17px;color:#1a1a1a;letter-spacing:2.6px;-webkit-text-stroke:0.7px #1a1a1a;left:39px;top:22px;transform:scaleY(0.82);transform-origin:0 0">天眼查</div>
  <div class="a" style="left:105px;top:22px;width:1px;height:12px;background:#ddd"></div>
  <div class="a" style="left:114px;top:22px;font-size:16px;color:#333">法院公告详情</div>
  <svg class="a" style="left:871px;top:21px" width="14" height="14" viewBox="0 0 14 14"><path d="M0.5 0.5 L13.5 13.5 M13.5 0.5 L0.5 13.5" stroke="#333" stroke-width="1.4"/></svg>
  <div class="a" style="left:0;top:56px;width:900px;height:1px;background:#f0f0f0"></div>
<table class="t">
<tr style="height:40px"><td class="l" style="width:173px">案号</td><td style="width:261px;padding-left:5px">（2025）京0491民初26325号</td><td class="l" style="width:173px">案由</td><td>网络侵权责任纠纷</td></tr>
<tr style="height:61px"><td class="l">当事人</td><td colspan="3">原告：迪某<br>被告：赵某</td></tr>
<tr style="height:39px"><td class="l">公告类型</td><td>裁判文书</td><td class="l">公告人</td><td>北京互联网法院</td></tr>
<tr style="height:39px"><td class="l">刊登版面</td><td>G123</td><td class="l">刊登日期</td><td>2026-04-03</td></tr>
<tr style="height:171px"><td class="l">内容</td><td colspan="3" style="line-height:22.2px">赵某： 本院对原告迪某与被告赵某网络侵权责任纠纷一案已审理终结。现依法向你公告送达（2025）京0491<br>民初26325号民事判决书,判决如下：一、自本判决生效之日起十日内，被告赵某在人民法院公告网上登载致歉<br>声明，就侵害名誉权一事向原告迪某赔礼道歉，恢复名誉，致歉内容需经本院审核（逾期不履行，本院将依据<br>原告迪某的申请，在人民法院公告网刊登本判决书主要内容，刊登费用由被告赵某负担）；二、自本判决生效<br>之日起十日内，被告赵某赔偿原告迪某公证费50元；三、驳回原告迪某的其他诉讼请求。自公告之日起30日内<br>来本院领取民事判决书，逾期则视为送达。如不服本判决，可在公告期满后15日内，向本院递交上诉状及副<br>本，上诉于北京市第四中级人民法院。逾期未上诉的，本判决即发生法律效力。</td></tr>
</table>
</div>
</body></html>
